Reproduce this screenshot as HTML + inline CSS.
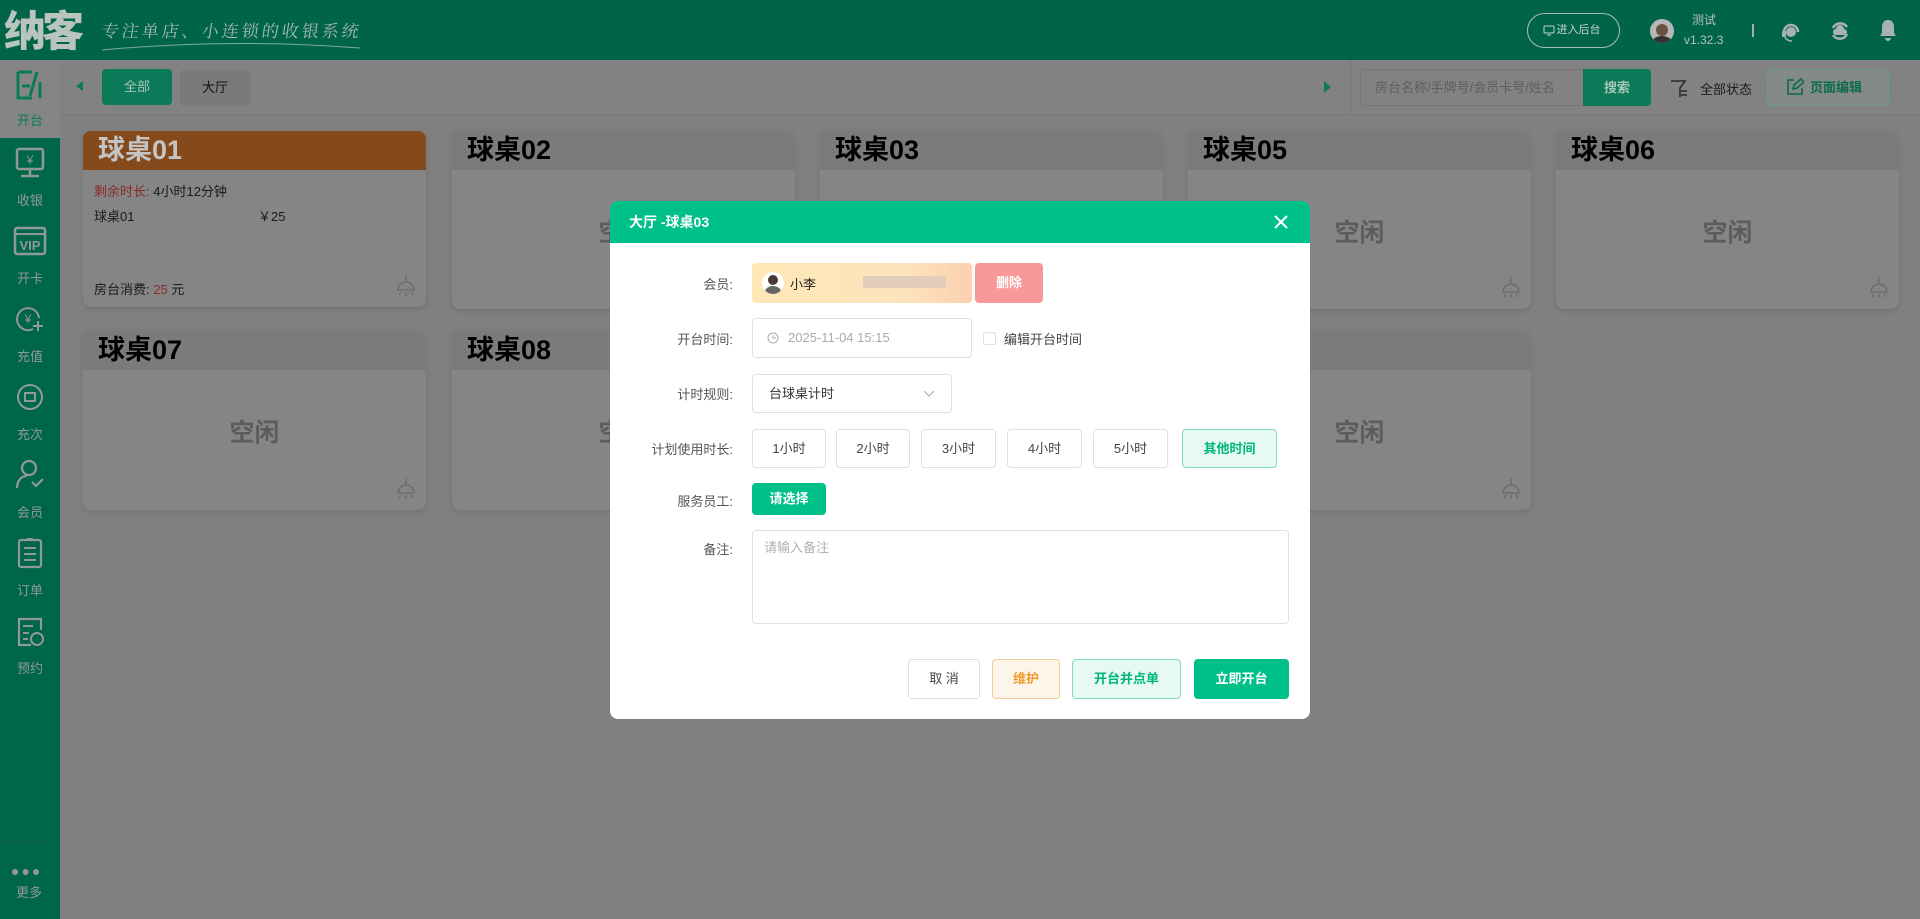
<!DOCTYPE html>
<html><head><meta charset="utf-8"><style>
*{box-sizing:border-box;margin:0;padding:0}
body{width:1920px;height:919px;overflow:hidden;background:#808080;font-family:"Liberation Sans","Noto Sans CJK SC",sans-serif;position:relative}
.a{position:absolute}
.hdr{left:0;top:0;width:1920px;height:60px;background:#006449}
.side{left:0;top:60px;width:60px;height:859px;background:#00664a}
.si{position:absolute;left:0;width:60px;height:78px;color:#8f9a95;font-size:13px;text-align:center}
.si svg{position:absolute;left:15px;top:8px}
.si span{position:absolute;left:0;right:0;top:52px}
.card{position:absolute;width:343px;background:#858585;border-radius:8px;overflow:hidden;box-shadow:0 2px 6px rgba(0,0,0,.12)}
.card .h{height:39px;background:#7b7b7b;font-size:27px;font-weight:bold;color:#000;padding-left:15px;line-height:38px}
.card .e{position:absolute;left:0;right:0;top:82px;text-align:center;font-size:25px;font-weight:bold;color:#5c5c5c}
.lamp{position:absolute;right:10px;bottom:10px}
.modal{left:610px;top:201px;width:700px;height:518px;background:#fff;border-radius:8px;overflow:hidden}
.mh{height:42px;background:#00c08a;color:#fff;font-weight:bold;font-size:14px;line-height:42px;padding-left:19px}
.lb{position:absolute;right:0;width:140px;text-align:right;font-size:13px;color:#555}
.btn{position:absolute;border:1px solid #dcdfe6;border-radius:4px;background:#fff;font-size:13px;color:#444;text-align:center}
</style></head><body>
<div class="a hdr">
 <div class="a" style="left:4px;top:6px;font-size:42px;font-weight:900;color:#b9c4bf;letter-spacing:-4px;line-height:46px;font-family:'Noto Sans CJK SC',sans-serif">纳客</div>
 <div class="a" style="left:102px;top:17px;font-size:17px;color:#a9bab3;letter-spacing:3px;font-family:'Noto Serif CJK SC',serif;transform:skewX(-8deg)">专注单店、小连锁的收银系统</div>
 <svg class="a" style="left:100px;top:40px" width="262" height="12"><path d="M2 10Q130 -2 260 8" stroke="#7fa898" stroke-width="1" fill="none"/></svg>
 <div class="a" style="left:1527px;top:13px;width:93px;height:35px;border:1px solid #a9bdb5;border-radius:18px;color:#c8d2ce;font-size:11px;line-height:33px;text-align:center;padding-left:10px">进入后台</div>
 <svg class="a" style="left:1543px;top:25px" width="12" height="11"><rect x="1" y="1" width="10" height="7" rx="1" stroke="#c8d2ce" fill="none"/><path d="M4 10h4" stroke="#c8d2ce"/></svg>
 <div class="a" style="left:1650px;top:19px;width:24px;height:24px;border-radius:50%;background:#b7b7b7;overflow:hidden"><div class="a" style="left:6px;top:5px;width:12px;height:12px;border-radius:50%;background:#6b5242"></div><div class="a" style="left:3px;top:17px;width:18px;height:10px;border-radius:50%;background:#333"></div></div>
 <div class="a" style="left:1692px;top:11px;font-size:12px;color:#b6c2bd">测试</div>
 <div class="a" style="left:1684px;top:33px;font-size:12px;color:#b6c2bd">v1.32.3</div>
 <div class="a" style="left:1752px;top:24px;width:2px;height:13px;background:#9fb1aa"></div>
 <svg class="a" style="left:1780px;top:20px" width="22" height="22"><path d="M4 12a7 7 0 0114 0" stroke="#a6b3ae" stroke-width="2.5" fill="none"/><circle cx="11" cy="12" r="5" fill="#a6b3ae"/><rect x="2" y="11" width="4" height="6" rx="1" fill="#a6b3ae"/><path d="M5 17q2 4 7 4" stroke="#a6b3ae" stroke-width="1.5" fill="none"/></svg>
 <svg class="a" style="left:1829px;top:20px" width="22" height="22"><path d="M4 8a8 8 0 0114-1M18 14a8 8 0 01-14 1" stroke="#a6b3ae" stroke-width="2.5" fill="none"/><path d="M7 15a3 3 0 010-6 4 4 0 018 0 3 3 0 010 6z" fill="#a6b3ae"/></svg>
 <svg class="a" style="left:1879px;top:19px" width="18" height="22"><path d="M9 1c-4 0-6 3-6 7v6l-2 3h16l-2-3V8c0-4-2-7-6-7zM6 19h6a3 3 0 01-6 0z" fill="#a6b3ae"/></svg>
</div>
<div class="a side">
 <div class="si" style="top:0;background:#858585;color:#0b7a58"><svg width="30" height="34"><path d="M3 4h14M3 4v26h14M7 18h8M22 4l-7 24M25 14v16" stroke="#0b7a58" stroke-width="3" fill="none"/></svg><span style="top:50px">开台</span></div>
 <div class="si" style="top:78px"><svg width="30" height="34"><rect x="2" y="3" width="26" height="20" rx="2" stroke="#8f9a95" stroke-width="2.5" fill="none"/><path d="M6 30h18M15 23v7" stroke="#8f9a95" stroke-width="2.5"/><text x="15" y="18" font-size="12" text-anchor="middle" fill="#8f9a95">¥</text></svg><span>收银</span></div>
 <div class="si" style="top:156px"><svg width="34" height="34" style="left:13px"><rect x="2" y="4" width="30" height="26" rx="2" stroke="#8f9a95" stroke-width="2.5" fill="none"/><path d="M2 10h30" stroke="#8f9a95" stroke-width="2"/><text x="17" y="26" font-size="13" font-weight="bold" text-anchor="middle" fill="#8f9a95">VIP</text></svg><span>开卡</span></div>
 <div class="si" style="top:234px"><svg width="30" height="34"><path d="M24 16a11 11 0 10-6 11" stroke="#8f9a95" stroke-width="2" fill="none"/><path d="M18 24h10M23 19v10" stroke="#8f9a95" stroke-width="2"/><text x="13" y="21" font-size="12" text-anchor="middle" fill="#8f9a95">¥</text></svg><span>充值</span></div>
 <div class="si" style="top:312px"><svg width="30" height="34"><circle cx="15" cy="17" r="12" stroke="#8f9a95" stroke-width="2" fill="none"/><rect x="10" y="13" width="10" height="8" stroke="#8f9a95" stroke-width="2" fill="none"/></svg><span>充次</span></div>
 <div class="si" style="top:390px"><svg width="30" height="34"><circle cx="14" cy="10" r="7" stroke="#8f9a95" stroke-width="2.2" fill="none"/><path d="M2 30c0-8 5-12 10-12M17 24l4 4 7-7" stroke="#8f9a95" stroke-width="2.2" fill="none"/></svg><span>会员</span></div>
 <div class="si" style="top:468px"><svg width="30" height="34"><rect x="4" y="4" width="22" height="27" rx="2" stroke="#8f9a95" stroke-width="2.2" fill="none"/><path d="M9 12h12M9 18h12M9 24h12M12 3h6" stroke="#8f9a95" stroke-width="2"/></svg><span>订单</span></div>
 <div class="si" style="top:546px"><svg width="30" height="34"><path d="M16 31H4V5h22v11" stroke="#8f9a95" stroke-width="2.2" fill="none"/><path d="M8 12h10M8 19h6M8 25h5" stroke="#8f9a95" stroke-width="2"/><circle cx="22" cy="25" r="6" stroke="#8f9a95" stroke-width="2" fill="none"/></svg><span>预约</span></div>
 <div class="a" style="left:0;top:781px;width:60px;height:1px;background:#0b5e44"></div>
 <div class="a" style="left:11px;top:803px;color:#8f9a95;font-size:14px;letter-spacing:2px">●●●</div>
 <div class="a" style="left:16px;top:822px;color:#8f9a95;font-size:13px">更多</div>
</div>
<div class="a" style="left:60px;top:60px;width:1860px;height:55px;background:#828282;border-bottom:1px solid #777"></div>
<div class="a" style="left:76px;top:81px;border:5px solid transparent;border-right:7px solid #0b7a58;border-left:0;height:0"></div>
<div class="a" style="left:102px;top:69px;width:70px;height:36px;background:#0b7a58;border-radius:4px;color:#a8c7bb;font-size:13px;text-align:center;line-height:36px">全部</div>
<div class="a" style="left:180px;top:70px;width:70px;height:36px;background:#7a7a7a;border-radius:4px;color:#111;font-size:13px;text-align:center;line-height:36px">大厅</div>
<div class="a" style="left:1324px;top:81px;border:6px solid transparent;border-left:7px solid #0b7a58;border-right:0;height:0"></div>
<div class="a" style="left:1350px;top:60px;width:1px;height:55px;background:#777"></div>
<div class="a" style="left:1360px;top:69px;width:224px;height:37px;border:1px solid #777;border-radius:4px 0 0 4px;color:#5e5e5e;font-size:13px;line-height:35px;padding-left:14px">房台名称/手牌号/会员卡号/姓名</div>
<div class="a" style="left:1583px;top:69px;width:68px;height:37px;background:#0b7a58;border-radius:0 4px 4px 0;color:#a8c7bb;font-size:13px;font-weight:bold;text-align:center;line-height:37px">搜索</div>
<svg class="a" style="left:1670px;top:79px" width="20" height="20"><path d="M1 2h14l-5 7v9M11 12h6M11 16h6" stroke="#2b2b2b" stroke-width="1.6" fill="none"/></svg>
<div class="a" style="left:1700px;top:79px;font-size:13px;color:#1c1c1c">全部状态</div>
<div class="a" style="left:1767px;top:69px;width:122px;height:37px;border:1px solid #6a9a88;border-radius:4px;background:#838a87;color:#0b6b4e;font-size:13px;font-weight:bold;line-height:35px;padding-left:42px">页面编辑</div>
<svg class="a" style="left:1786px;top:78px" width="18" height="18"><path d="M8 2H2v14h14v-6M7 11l1-4 7-6 3 3-7 6z" stroke="#0b6b4e" stroke-width="1.6" fill="none"/></svg>
<div class="card" style="left:83px;top:131px;height:176px"><div class="h" style="background:#854a1c;color:#c4c4c4">球桌01</div>
 <div class="a" style="left:11px;top:50px;font-size:13px;color:#1a1a1a"><span style="color:#8c2a2a">剩余时长:</span> 4小时12分钟</div>
 <div class="a" style="left:11px;top:75px;font-size:13px;color:#1a1a1a">球桌01</div><div class="a" style="left:175px;top:75px;font-size:13px;color:#1a1a1a">￥25</div>
 <div class="a" style="left:11px;top:148px;font-size:13px;color:#1a1a1a">房台消费: <span style="color:#8c2a2a">25</span> 元</div>
 <svg class="lamp" width="20" height="22"><path d="M10 0v7M2 15a8 8 0 0116 0zM10 17v4M5 17l-2 3M15 17l2 3" stroke="#6a6a6a" stroke-width="1.3" fill="none"/></svg></div>
<div class="card" style="left:452px;top:131px;height:178px"><div class="h">球桌02</div><div class="e">空闲</div></div>
<div class="card" style="left:820px;top:131px;height:178px"><div class="h">球桌03</div><div class="e">空闲</div></div>
<div class="card" style="left:1188px;top:131px;height:178px"><div class="h">球桌05</div><div class="e">空闲</div><svg class="lamp" width="20" height="22"><path d="M10 0v7M2 15a8 8 0 0116 0zM10 17v4M5 17l-2 3M15 17l2 3" stroke="#6a6a6a" stroke-width="1.3" fill="none"/></svg></div>
<div class="card" style="left:1556px;top:131px;height:178px"><div class="h">球桌06</div><div class="e">空闲</div><svg class="lamp" width="20" height="22"><path d="M10 0v7M2 15a8 8 0 0116 0zM10 17v4M5 17l-2 3M15 17l2 3" stroke="#6a6a6a" stroke-width="1.3" fill="none"/></svg></div>
<div class="card" style="left:83px;top:331px;height:179px"><div class="h">球桌07</div><div class="e">空闲</div><svg class="lamp" width="20" height="22"><path d="M10 0v7M2 15a8 8 0 0116 0zM10 17v4M5 17l-2 3M15 17l2 3" stroke="#6a6a6a" stroke-width="1.3" fill="none"/></svg></div>
<div class="card" style="left:452px;top:331px;height:179px"><div class="h">球桌08</div><div class="e">空闲</div></div>
<div class="card" style="left:820px;top:331px;height:179px"><div class="h"></div><div class="e">空闲</div></div>
<div class="card" style="left:1188px;top:331px;height:179px"><div class="h"></div><div class="e">空闲</div><svg class="lamp" width="20" height="22"><path d="M10 0v7M2 15a8 8 0 0116 0zM10 17v4M5 17l-2 3M15 17l2 3" stroke="#6a6a6a" stroke-width="1.3" fill="none"/></svg></div>
<div class="a modal">
 <div class="mh">大厅 -球桌03</div>
 <svg class="a" style="left:664px;top:14px" width="14" height="14"><path d="M1 1l12 12M13 1L1 13" stroke="#fff" stroke-width="2"/></svg>
 <div class="lb" style="left:0;width:123px;top:73px">会员:</div>
 <div class="a" style="left:142px;top:62px;width:220px;height:40px;border-radius:4px;background:linear-gradient(90deg,#fde8b6,#fde3bd 70%,#fcd0b0)"></div>
 <div class="a" style="left:152px;top:71px;width:22px;height:22px;border-radius:50%;background:#fff;overflow:hidden"><div class="a" style="left:6px;top:3px;width:10px;height:10px;border-radius:50%;background:#4a3a34"></div><div class="a" style="left:3px;top:14px;width:16px;height:12px;border-radius:50%;background:#666"></div></div>
 <div class="a" style="left:180px;top:73px;font-size:13px;color:#222">小李</div>
 <div class="a" style="left:253px;top:75px;width:83px;height:12px;background:#e2ceb8"></div>
 <div class="a" style="left:365px;top:62px;width:68px;height:40px;border-radius:4px;background:#f89898;color:#fff;font-size:13px;font-weight:bold;text-align:center;line-height:40px">删除</div>
 <div class="lb" style="left:0;width:123px;top:128px">开台时间:</div>
 <div class="btn" style="left:142px;top:117px;width:220px;height:40px;text-align:left;padding-left:35px;line-height:38px;color:#aaa">2025-11-04 15:15</div>
 <svg class="a" style="left:157px;top:131px" width="12" height="12"><circle cx="6" cy="6" r="5" stroke="#aaa" fill="none"/><path d="M6 3v3h3" stroke="#aaa" fill="none"/></svg>
 <div class="a" style="left:373px;top:131px;width:13px;height:13px;border:1px solid #dcdfe6;border-radius:2px"></div>
 <div class="a" style="left:394px;top:128px;font-size:13px;color:#444">编辑开台时间</div>
 <div class="lb" style="left:0;width:123px;top:183px">计时规则:</div>
 <div class="btn" style="left:142px;top:173px;width:200px;height:39px;text-align:left;padding-left:16px;line-height:37px;color:#333">台球桌计时</div>
 <svg class="a" style="left:313px;top:189px" width="12" height="8"><path d="M1 1l5 5 5-5" stroke="#aaa" fill="none"/></svg>
 <div class="lb" style="left:0;width:123px;top:238px">计划使用时长:</div>
 <div class="btn" style="left:142px;top:228px;width:74px;height:39px;line-height:37px">1小时</div>
 <div class="btn" style="left:226px;top:228px;width:74px;height:39px;line-height:37px">2小时</div>
 <div class="btn" style="left:311px;top:228px;width:75px;height:39px;line-height:37px">3小时</div>
 <div class="btn" style="left:397px;top:228px;width:75px;height:39px;line-height:37px">4小时</div>
 <div class="btn" style="left:483px;top:228px;width:75px;height:39px;line-height:37px">5小时</div>
 <div class="btn" style="left:572px;top:228px;width:95px;height:39px;line-height:37px;background:#e6f9f2;border-color:#7fdcbc;color:#00b67f;font-weight:bold">其他时间</div>
 <div class="lb" style="left:0;width:123px;top:290px">服务员工:</div>
 <div class="a" style="left:142px;top:282px;width:74px;height:32px;background:#00c08a;border-radius:4px;color:#fff;font-size:13px;font-weight:bold;text-align:center;line-height:32px">请选择</div>
 <div class="lb" style="left:0;width:123px;top:338px">备注:</div>
 <div class="btn" style="left:142px;top:329px;width:537px;height:94px;text-align:left;padding:6px 11px;color:#b0b0b0">请输入备注</div>
 <div class="btn" style="left:298px;top:458px;width:72px;height:40px;line-height:38px">取 消</div>
 <div class="btn" style="left:382px;top:458px;width:68px;height:40px;line-height:38px;background:#fdf5ea;border-color:#f5cd95;color:#ee9c2c;font-weight:bold">维护</div>
 <div class="btn" style="left:462px;top:458px;width:109px;height:40px;line-height:38px;background:#e6f9f2;border-color:#7fdcbc;color:#00b67f;font-weight:bold">开台并点单</div>
 <div class="a" style="left:584px;top:458px;width:95px;height:40px;background:#00c08a;border-radius:4px;color:#fff;font-size:13px;font-weight:bold;text-align:center;line-height:40px">立即开台</div>
</div>
</body></html>
